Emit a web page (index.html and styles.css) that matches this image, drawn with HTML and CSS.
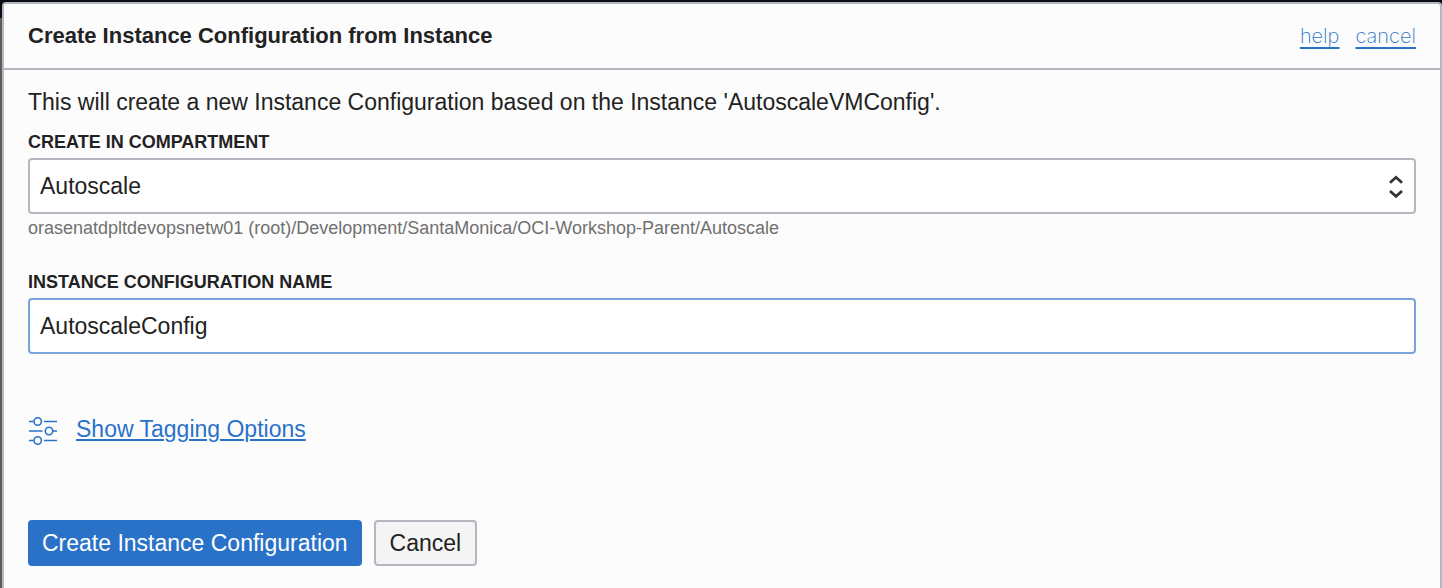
FILE: index.html
```html
<!DOCTYPE html>
<html lang="en">
<head>
<meta charset="utf-8">
<title>Create Instance Configuration from Instance</title>
<link rel="stylesheet" href="styles.css">
</head>
<body>
<main class="dialog" role="dialog" aria-labelledby="dialog-title">
  <header class="dialog-header">
    <h1 class="dialog-title" id="dialog-title">Create Instance Configuration from Instance</h1>
    <nav class="dialog-links">
      <a href="#help">help</a>
      <a href="#cancel">cancel</a>
    </nav>
  </header>
  <form class="dialog-body">
    <p class="intro">This will create a new Instance Configuration based on the Instance 'AutoscaleVMConfig'.</p>
    <div class="field">
      <label class="label" for="compartment">CREATE IN COMPARTMENT</label>
      <div class="select-wrap">
        <select class="control" id="compartment">
          <option>Autoscale</option>
        </select>
        <svg class="select-arrows" viewBox="0 0 16 24" aria-hidden="true"><path d="M2 7.700 8 2.300 14 7.700M2 16 8 21.400 14 16"/></svg>
      </div>
      <p class="hint">orasenatdpltdevopsnetw01 (root)/Development/SantaMonica/OCI-Workshop-Parent/Autoscale</p>
    </div>
    <div class="field">
      <label class="label" for="config-name">INSTANCE CONFIGURATION NAME</label>
      <input class="control control-active" id="config-name" type="text" value="AutoscaleConfig">
    </div>
    <div class="tagging">
      <svg class="tagging-icon" viewBox="0 0 30 32" aria-hidden="true">
        <path d="M1 8.500h4.500M16 8.500h13M1 18h13.500M24.500 18h4.500M1 27.500h4.500M16 27.500h13"/>
        <circle cx="9.700" cy="8.500" r="3.700"/><circle cx="21" cy="18" r="3.700"/><circle cx="9.700" cy="27.500" r="3.700"/>
      </svg>
      <a href="#tagging">Show Tagging Options</a>
    </div>
    <div class="actions">
      <button class="button button-primary" type="submit">Create Instance Configuration</button>
      <button class="button" type="button">Cancel</button>
    </div>
  </form>
</main>
</body>
</html>
```
FILE: styles.css
```css
* {
  box-sizing: border-box;
}

body {
  margin: 0;
  min-height: 100vh;
  display: flex;
  padding: 2px 0 0 2px;
  background: linear-gradient(#0b0c14 18px, #5c5c5e 18px);
  font: 23px/28px "Liberation Sans", Arial, sans-serif;
  color: #222;
}

h1,
p {
  margin: 0;
}

a {
  color: #2a72c8;
  text-decoration-thickness: 2px;
  text-underline-offset: 2px;
}

.dialog {
  flex: 1;
  border: 2px solid #b3b8c0;
  border-bottom: 0;
  border-radius: 4px 4px 0 0;
  background: #fcfcfc;
}

.dialog-header {
  display: flex;
  align-items: center;
  justify-content: space-between;
  padding: 18px 24px;
  border-bottom: 2px solid #b3b8c0;
}

.dialog-title {
  font-size: 22px;
  line-height: 28px;
  font-weight: bold;
}

.dialog-links {
  display: flex;
  gap: 16px;
  font-family: Inter, "Liberation Sans", sans-serif;
  font-size: 20px;
  font-weight: 200;
}

.dialog-links a {
  text-underline-offset: 4px;
}

.dialog-body {
  padding: 18px 24px 22px;
}

.intro {
  margin-bottom: 14px;
}

.field {
  margin-bottom: 30px;
}

.label {
  display: block;
  margin-bottom: 4px;
  font-size: 18px;
  line-height: 24px;
  font-weight: bold;
}

.select-wrap {
  position: relative;
}

.control {
  display: block;
  width: 100%;
  height: 56px;
  padding: 0 10px;
  border: 2px solid #b3b8c0;
  border-radius: 4px;
  outline: 0;
  appearance: none;
  background: #fff;
  color: inherit;
  font: inherit;
}

.control-active {
  border-color: #7aa5dc;
}

.select-arrows {
  position: absolute;
  top: 17px;
  right: 12px;
  width: 16px;
  height: 24px;
  fill: none;
  stroke: #333;
  stroke-width: 2.800;
  pointer-events: none;
}

.hint {
  margin-top: 2px;
  font-size: 18px;
  line-height: 24px;
  color: #707070;
}

.tagging {
  display: flex;
  align-items: center;
  gap: 18px;
  margin: 59px 0 75px;
}

.tagging-icon {
  width: 30px;
  height: 32px;
  fill: none;
  stroke: #2a72c8;
  stroke-width: 1.600;
}

.actions {
  display: flex;
  gap: 12px;
}

.button {
  height: 46px;
  padding: 0 14px;
  border: 2px solid #b3b8c0;
  border-radius: 4px;
  background: #f4f4f4;
  color: #222;
  font: inherit;
}

.button-primary {
  padding: 0 12px;
  border-color: #2a72c8;
  background: #2a72c8;
  color: #fff;
}
```
